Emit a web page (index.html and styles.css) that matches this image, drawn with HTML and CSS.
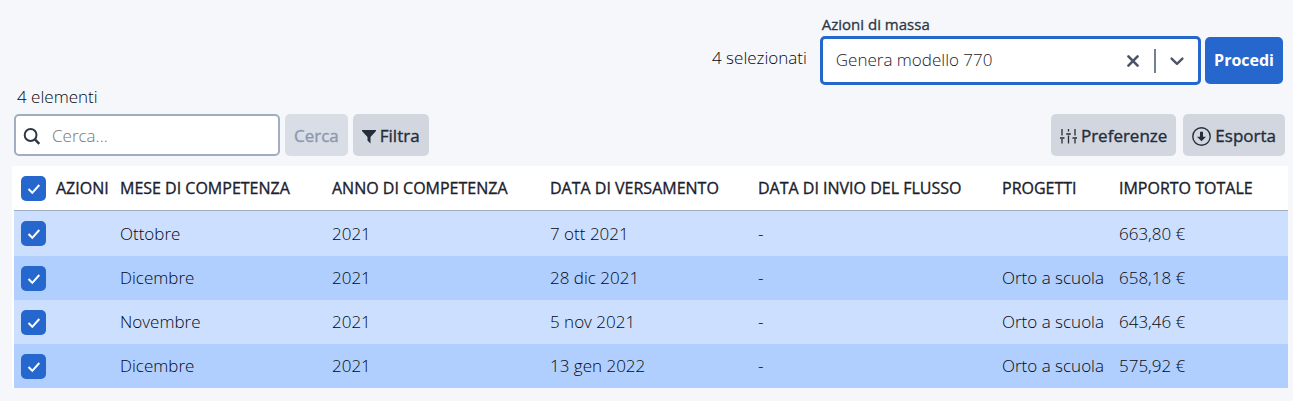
FILE: index.html
```html
<!DOCTYPE html>
<html lang="it">
<head>
<meta charset="utf-8">
<meta name="viewport" content="width=device-width, initial-scale=1">
<title>Genera modello 770</title>
<link rel="stylesheet" href="styles.css">
</head>
<body>
<main class="page">
  <form class="bulk">
    <span class="bulk-count">4 selezionati</span>
    <div class="bulk-field">
      <label class="bulk-label" for="bulk-action">Azioni di massa</label>
      <div class="combo">
        <select class="combo-select" id="bulk-action"><option>Genera modello 770</option></select>
        <button class="combo-clear" type="button" aria-label="Cancella">
          <svg width="20" height="20" viewBox="0 0 20 20" fill="none" stroke="currentColor" stroke-width="2.6" stroke-linecap="round"><path d="M5.400 5.400l9.200 9.200M14.600 5.400l-9.200 9.200"/></svg>
        </button>
        <span class="combo-rule"></span>
        <svg class="combo-arrow" width="20" height="20" viewBox="0 0 20 20" fill="none" stroke="currentColor" stroke-width="2.4" stroke-linecap="round" stroke-linejoin="round"><path d="M4.600 7.600L10 12.800l5.400-5.200"/></svg>
      </div>
    </div>
    <button class="btn btn-primary" type="button">Procedi</button>
  </form>

  <p class="total">4 elementi</p>

  <div class="toolbar">
    <label class="search">
      <svg class="search-icon" width="18" height="18" viewBox="0 0 18 18" fill="none" stroke="currentColor" stroke-width="2"><circle cx="7.600" cy="8" r="5.900"/><path d="M11.900 12.300l4.400 4.600" stroke-width="2.400"/></svg>
      <input class="search-input" type="text" placeholder="Cerca..." aria-label="Cerca">
    </label>
    <button class="btn" type="button" disabled>Cerca</button>
    <button class="btn" type="button">
      <svg width="14" height="16" viewBox="0 0 14 16" fill="currentColor"><path d="M0 2h14v1L8.500 9v6.500L5.500 12.500V9L0 3z"/></svg>
      Filtra
    </button>
    <button class="btn btn-prefs" type="button">
      <svg width="17" height="16" viewBox="0 0 17 16" fill="none" stroke="currentColor" stroke-width="1.300"><path d="M2 1v6.500M2 11v4.500M8.500 1v2.500M8.500 7.500v8M15 1v6.500M15 11v4.500"/><path d="M0 10h4.500M6.200 6h4.600M12.500 10H17" stroke-width="1.700"/></svg>
      Preferenze
    </button>
    <button class="btn" type="button">
      <svg class="icon-low" width="19" height="19" viewBox="0 0 19 19" fill="none"><circle cx="9.500" cy="9.500" r="8.700" stroke="currentColor" stroke-width="1.400"/><path d="M8 4.800h3v5h3l-4.500 4.500-4.500-4.500h3z" fill="currentColor"/></svg>
      Esporta
    </button>
  </div>

  <div class="sheet">
    <table class="grid">
      <colgroup><col class="c-check"><col class="c-actions"><col class="c-month"><col class="c-year"><col class="c-paid"><col class="c-sent"><col class="c-project"><col class="c-amount"></colgroup>
      <thead>
        <tr><th><input class="check" type="checkbox" checked aria-label="Seleziona tutti"></th><th>AZIONI</th><th>MESE DI COMPETENZA</th><th>ANNO DI COMPETENZA</th><th>DATA DI VERSAMENTO</th><th>DATA DI INVIO DEL FLUSSO</th><th>PROGETTI</th><th>IMPORTO TOTALE</th></tr>
      </thead>
      <tbody>
        <tr><td><input class="check" type="checkbox" checked aria-label="Seleziona riga 1"></td><td></td><td>Ottobre</td><td>2021</td><td>7 ott 2021</td><td>-</td><td></td><td>663,80 €</td></tr>
        <tr><td><input class="check" type="checkbox" checked aria-label="Seleziona riga 2"></td><td></td><td>Dicembre</td><td>2021</td><td>28 dic 2021</td><td>-</td><td>Orto a scuola</td><td>658,18 €</td></tr>
        <tr><td><input class="check" type="checkbox" checked aria-label="Seleziona riga 3"></td><td></td><td>Novembre</td><td>2021</td><td>5 nov 2021</td><td>-</td><td>Orto a scuola</td><td>643,46 €</td></tr>
        <tr><td><input class="check" type="checkbox" checked aria-label="Seleziona riga 4"></td><td></td><td>Dicembre</td><td>2021</td><td>13 gen 2022</td><td>-</td><td>Orto a scuola</td><td>575,92 €</td></tr>
      </tbody>
    </table>
  </div>
</main>
</body>
</html>
```

FILE: styles.css
```css
* { box-sizing: border-box; }

body {
  margin: 0;
  background: #f5f7fb;
  color: #05080f;
  font: 300 17px/24px "Open Sans", "Noto Sans", sans-serif;
}

input, select, button { font: inherit; color: inherit; }

.page { padding: 12px 5px 12px 12px; }

.bulk {
  display: flex;
  justify-content: flex-end;
  align-items: flex-end;
  gap: 4px;
  padding-right: 5px;
}
.bulk-count { padding: 0 9px 15px 0; }
.bulk-field { width: 30%; }
.bulk-label {
  display: block;
  padding-left: 2px;
  color: #2d3748;
  font-size: 15px;
  font-weight: 400;
  -webkit-text-stroke: thin;
}

.combo {
  position: relative;
  display: flex;
  align-items: center;
  justify-content: flex-end;
  gap: 11px;
  height: 49px;
  padding: 0 11px;
  border: 3px solid #2567cc;
  border-radius: 5px;
  background: #fff;
  color: #4a5568;
}
/* The select fills the box; its controls are drawn over it. */
.combo-select {
  position: absolute;
  inset: 0;
  width: 100%;
  padding: 0 13px 2px;
  border: 0;
  outline: 0;
  background: transparent;
  appearance: none;
  color: #1a202c;
}
.combo-clear {
  position: relative;
  display: flex;
  padding: 0;
  border: 0;
  background: none;
}
.combo-rule { position: relative; width: 2px; height: 24px; background: #718096; }
.combo-arrow { position: relative; pointer-events: none; }

.btn {
  display: flex;
  align-items: center;
  justify-content: center;
  gap: 4px;
  height: 42px;
  padding: 2px 9px 0;
  border: 0;
  border-radius: 5px;
  background: #d2d6df;
  color: #252d3b;
  font-weight: 400;
  -webkit-text-stroke: thin;
  white-space: nowrap;
}
.btn:disabled { background: #d9dde5; color: #8a99b0; }
.btn-primary {
  height: 47px;
  margin-bottom: 1px;
  padding: 0 9px 2px;
  background: #2567cc;
  color: #fff;
  font-size: 16px;
  font-weight: 700;
  -webkit-text-stroke: 0;
}
.btn-prefs { margin: 0 2px 0 auto; }
.icon-low { margin-top: 1px; }

.total { margin: 0; padding-left: 5px; }

.toolbar {
  display: flex;
  gap: 5px;
  margin: 5px 0 10px;
  padding: 0 3px 0 2px;
}
.search {
  display: flex;
  align-items: center;
  gap: 11px;
  width: 266px;
  height: 42px;
  padding: 1px 7px 0;
  border: 2px solid #a0aec0;
  border-radius: 5px;
  background: #fff;
  color: #2d3748;
}
.search-icon { flex: none; }
.search-input {
  flex: 1;
  min-width: 0;
  padding: 0;
  border: 0;
  outline: 0;
  background: none;
}
.search-input::placeholder { color: #757575; opacity: 1; }

.sheet { padding-left: 2px; background: #fff; }
.grid {
  width: 100%;
  border-collapse: separate;
  border-spacing: 0;
  table-layout: fixed;
}
.c-check { width: 36px; }
.c-actions { width: 64px; }
.c-month { width: 212px; }
.c-year { width: 218px; }
.c-paid { width: 208px; }
.c-sent { width: 244px; }
.c-project { width: 117px; }
.c-amount { width: 175px; }

th, td {
  height: 44px;
  padding: 0 0 0 6px;
  text-align: left;
  white-space: nowrap;
}
th {
  height: 45px;
  border-bottom: 1px solid #a0aec0;
  color: #1a202c;
  font-size: 16px;
  font-weight: 500;
}
tbody tr { background: #cddffe; }
tbody tr:nth-child(even) { background: #b1cffe; }
tbody tr:first-child td { height: 45px; }
th { font-weight: 400; -webkit-text-stroke: thin; }

.check {
  display: block;
  width: 25px;
  height: 25px;
  margin: 0 0 0 1px;
  border-radius: 5px;
  appearance: none;
  background: #2567cc;
}
.check:checked {
  background-image: url("data:image/svg+xml,%3Csvg xmlns='http://www.w3.org/2000/svg' viewBox='0 0 25 25' fill='none' stroke='white' stroke-width='2'%3E%3Cpath d='M7.500 13l3.800 3.800L18.300 9'/%3E%3C/svg%3E");
}
```
